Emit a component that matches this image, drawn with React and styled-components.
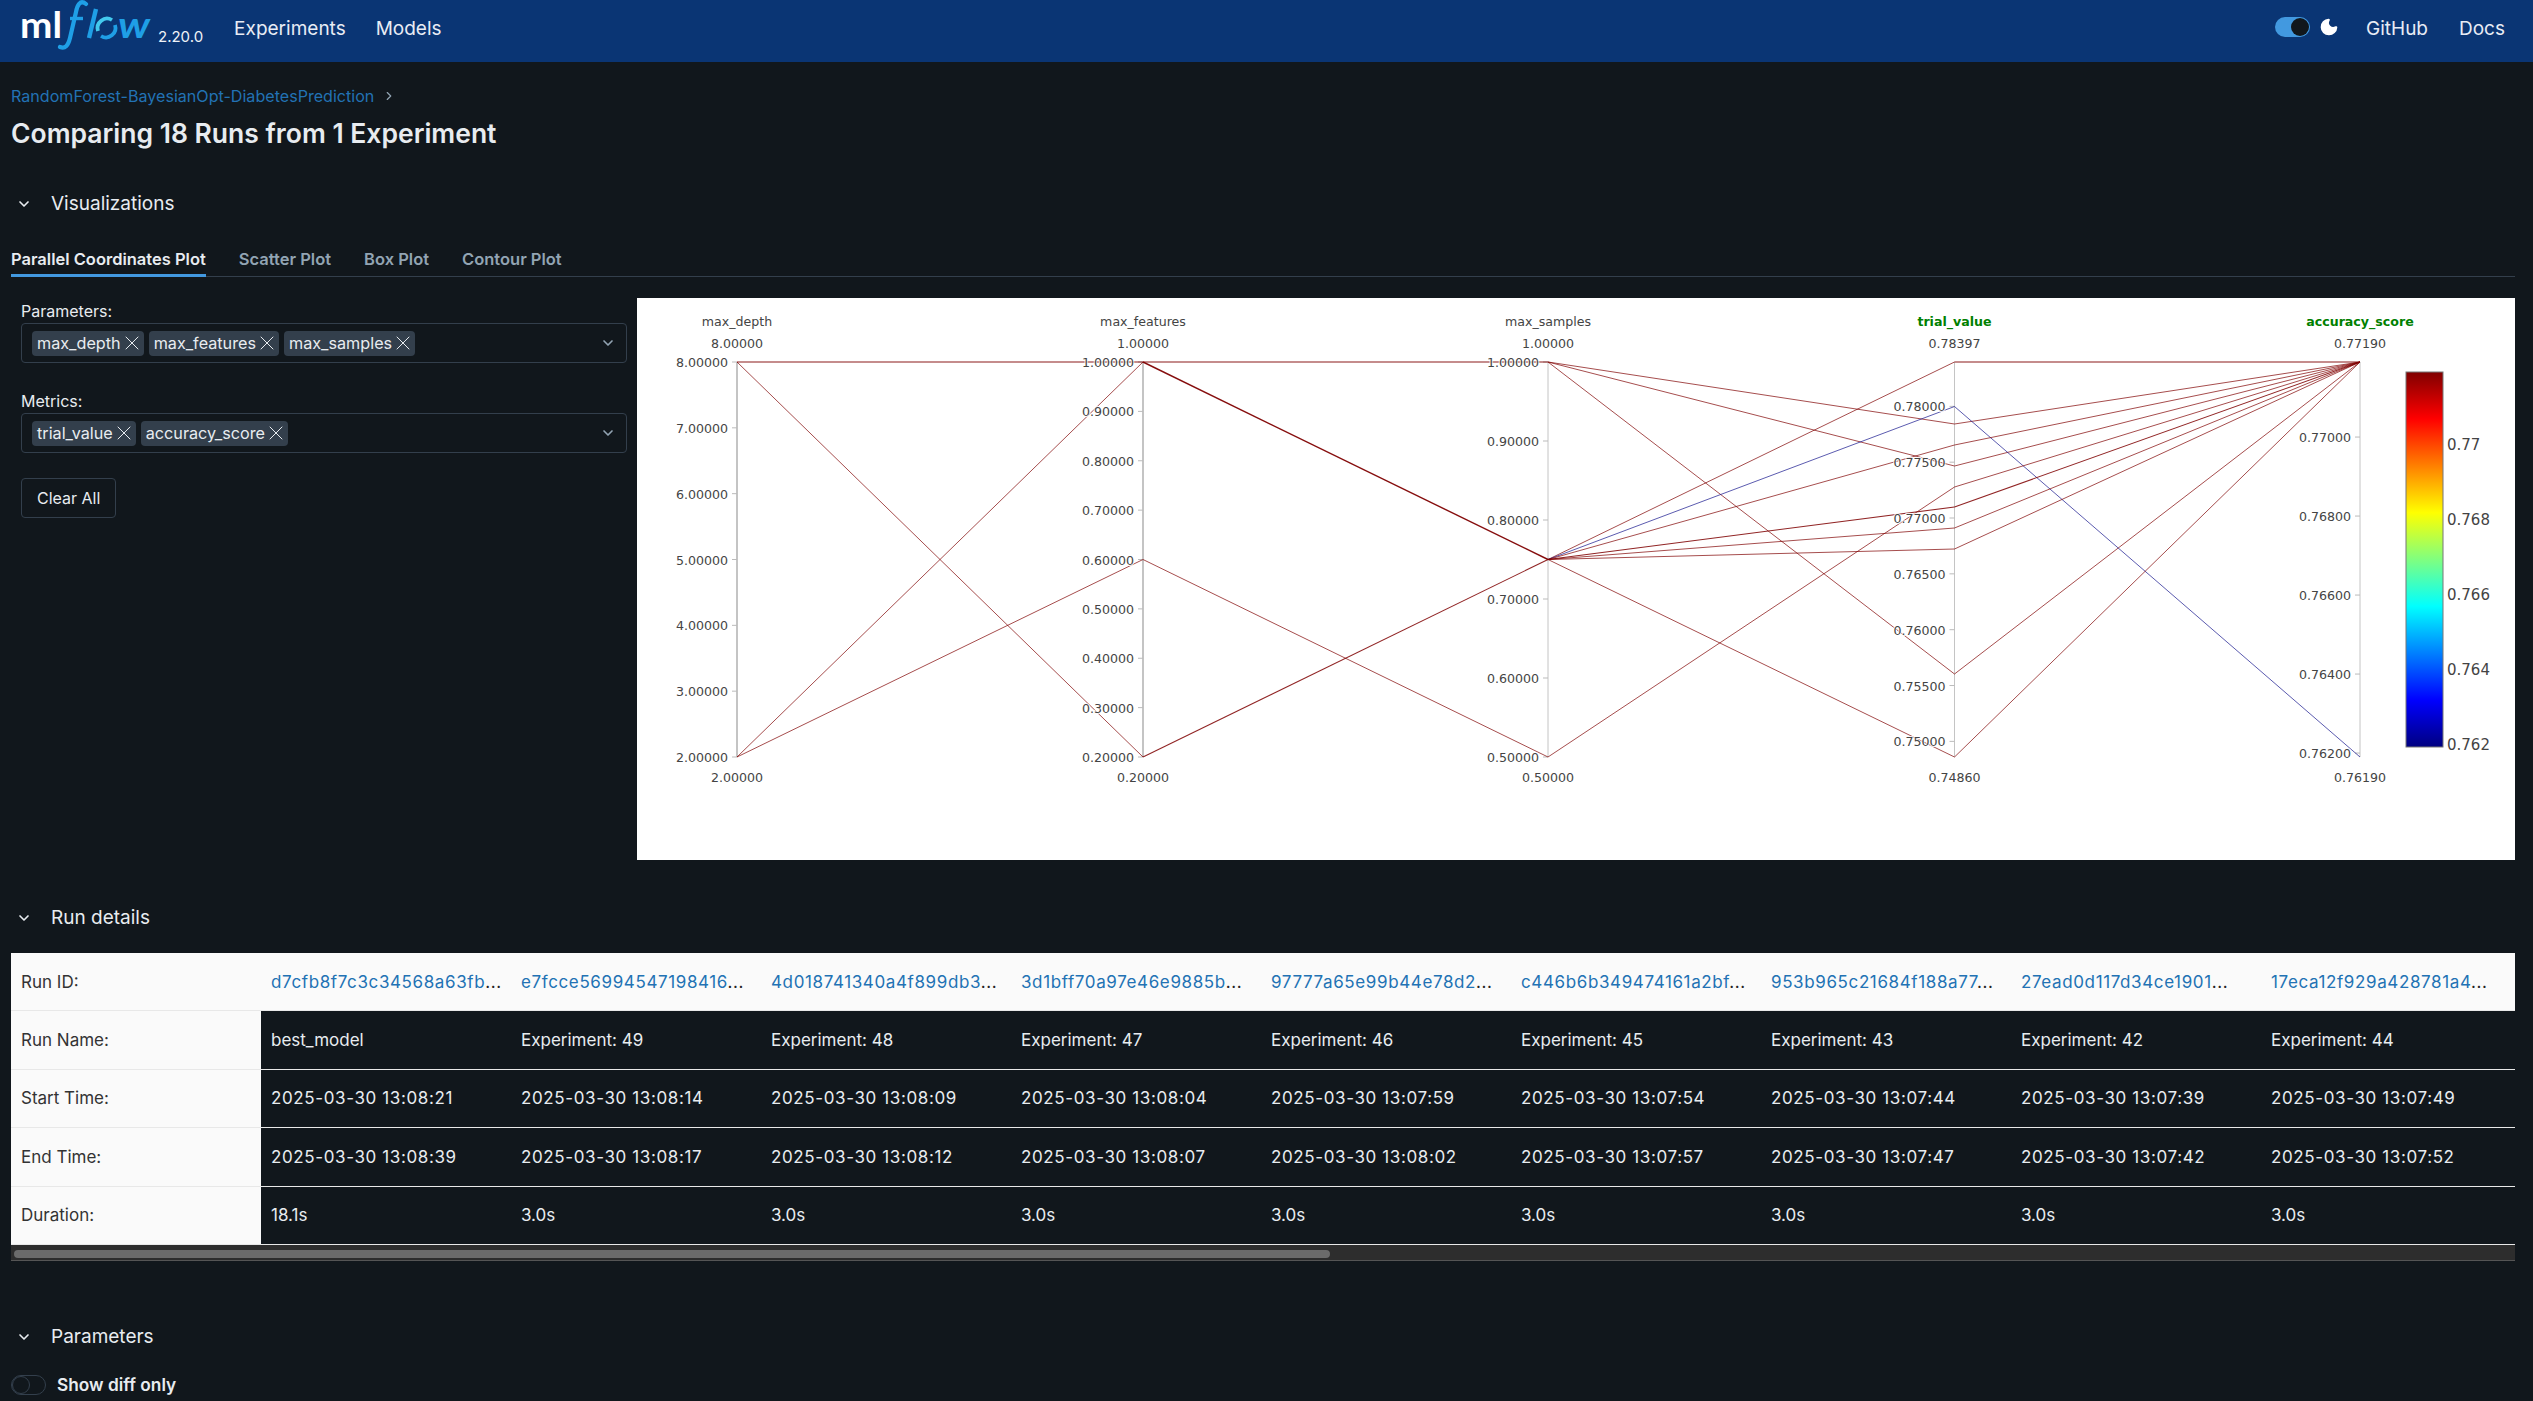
import React from 'react';
import styled, { createGlobalStyle } from 'styled-components';
import { ChevronDown, ChevronRight, Moon, X } from 'lucide-react';

const FONT = 'Inter, "Noto Sans", sans-serif';
const PAGE_BG = '#11171c';
const LINK = '#2272b4';

const GlobalStyle = createGlobalStyle`
  html, body {
    margin: 0;
    overflow: hidden;
    background: ${PAGE_BG};
  }
  * {
    box-sizing: border-box;
  }
`;

const Page = styled.div`
  min-height: 100vh;
  background: ${PAGE_BG};
  color: #e8ecf0;
  font-family: ${FONT};
`;

const Header = styled.header`
  display: flex;
  align-items: center;
  height: 62px;
  padding: 0 28px 6px 10px;
  background: #0a3574;
`;

const LogoMark = styled.svg`
  display: block;
  width: 150px;
  height: 62px;
  margin-top: 6px;
  flex: none;
`;

const Version = styled.span`
  margin: 17px 0 0 -2px;
  font-size: 15px;
  color: #eef2f7;
`;

const HeaderLink = styled.a`
  margin-left: ${(p) => p.$gap}px;
  font-size: 19px;
  color: #e8ecf5;
`;

const HeaderRight = styled.div`
  display: flex;
  align-items: center;
  margin-left: auto;
`;

const ThemeToggle = styled.div`
  display: flex;
  justify-content: flex-end;
  align-items: center;
  width: 35px;
  height: 20px;
  margin-bottom: 2px;
  padding: 0 1px;
  border-radius: 10px;
  background: #4299e0;
`;

const ToggleKnob = styled.span`
  width: 18px;
  height: 18px;
  border-radius: 50%;
  background: ${PAGE_BG};
`;

const MoonIcon = styled(Moon)`
  margin: 0 -1px 2px 9px;
  fill: #fff;
  color: #fff;
`;

const Main = styled.main`
  padding: 0 18px 0 11px;
`;

const Breadcrumb = styled.nav`
  display: flex;
  align-items: center;
  gap: 8px;
  margin-top: 24px;
  font-size: 16.1px;
  line-height: 20px;
  color: #2272b4;
`;

const Title = styled.h1`
  margin: 10px 0 0;
  font-size: 26.5px;
  font-weight: 600;
  line-height: 34px;
  color: #e8ecf0;
`;

const SectionHeader = styled.div`
  display: flex;
  align-items: center;
  margin-top: ${(p) => p.$top}px;
  padding-left: 5px;
  font-size: 19px;
  line-height: 24px;
  color: #e8ecf0;
`;

const SectionChevron = styled(ChevronDown)`
  margin-right: 19px;
`;

const Tabs = styled.div`
  display: flex;
  gap: 33px;
  margin-top: 19px;
  border-bottom: 1px solid #333f4c;
`;

const Tab = styled.div`
  padding: 14px 0 5px;
  border-bottom: 3px solid ${(p) => (p.$active ? '#4299e0' : 'transparent')};
  margin-bottom: -1px;
  font-size: 16.5px;
  font-weight: 600;
  line-height: 20px;
  color: ${(p) => (p.$active ? '#e8ecf0' : '#92a4b3')};
`;

const VizBody = styled.div`
  display: grid;
  grid-template-columns: 626px 1fr;
  margin-top: 21px;
`;

const Controls = styled.div`
  padding: 3px 10px;
`;

const FieldLabel = styled.div`
  margin-top: ${(p) => p.$top || 0}px;
  margin-bottom: 2px;
  font-size: 16px;
  line-height: 20px;
  color: #e8ecf0;
`;

const SelectBox = styled.div`
  display: flex;
  align-items: center;
  gap: 5px;
  height: 40px;
  padding: 0 10px;
  border: 1px solid #333f4c;
  border-radius: 4px;
`;

const SelectChevron = styled(ChevronDown)`
  margin-left: auto;
  color: #92a4b3;
`;

const Tag = styled.span`
  display: flex;
  align-items: center;
  gap: 3px;
  height: 25px;
  padding: 0 4px 0 5px;
  border-radius: 4px;
  background: #333f4c;
  font-size: 16.2px;
  color: #e8ecf0;
`;

const TagClose = styled(X)`
  margin: -4px;
`;

const ClearButton = styled.button`
  display: block;
  height: 40px;
  margin-top: 25px;
  padding: 0 15px;
  border: 1px solid #333f4c;
  border-radius: 4px;
  background: transparent;
  font-family: ${FONT};
  font-size: 16px;
  color: #e8ecf0;
`;

const PlotFrame = styled.div`
  height: 562px;
  background: #fff;
`;

const PlotSvg = styled.svg`
  display: block;
  width: 100%;
  height: 100%;
  font-family: "DejaVu Sans", sans-serif;
`;

const AxisText = styled.text`
  font-size: 12.6px;
  fill: ${(p) => p.$fill || '#444'};
  font-weight: ${(p) => (p.$bold ? 700 : 400)};
  stroke: #fff;
  stroke-width: 2px;
  stroke-opacity: 0.8;
  paint-order: stroke;
`;

const ScaleText = styled.text`
  font-size: 15px;
  fill: #444;
`;

const TableWrap = styled.div`
  margin-top: 23px;
  overflow: hidden;
`;

const RunTable = styled.table`
  width: 2750px;
  table-layout: fixed;
  border-collapse: separate;
  border-spacing: 0;
`;

const LabelCell = styled.th`
  width: 250px;
  height: 58.4px;
  padding: 0 10px;
  border-bottom: 1px solid #e8e8e8;
  background: #fafafa;
  font-size: 17px;
  font-weight: 400;
  text-align: left;
  color: #333;
`;

const ValueCell = styled.td`
  height: 58.4px;
  padding: 0 10px;
  border-bottom: 1px solid #e8e8e8;
  background: ${(p) => (p.$light ? '#fafafa' : 'transparent')};
  font-size: 17px;
  letter-spacing: ${(p) => (p.$spaced ? '0.62px' : '0')};
  white-space: nowrap;
  color: ${(p) => (p.$light ? '#222' : '#e8ecf0')};
`;

const RunLink = styled.a`
  color: ${LINK};
`;

const ScrollTrack = styled.div`
  height: 16px;
  padding: 5px 0 0 3px;
  background: #2d2d2d;
  border-bottom: 1px solid #555;
`;

const ScrollThumb = styled.div`
  width: 1316px;
  height: 8px;
  border-radius: 4px;
  background: #6b6b6b;
`;

const DiffRow = styled.div`
  display: flex;
  align-items: center;
  gap: 11px;
  margin-top: 26px;
  font-size: 17.3px;
  font-weight: 600;
  line-height: 20px;
`;

const DiffSwitch = styled.div`
  display: flex;
  align-items: center;
  width: 35px;
  height: 20px;
  border: 1px solid #333f4c;
  border-radius: 10px;
`;

const DiffKnob = styled.span`
  width: 18px;
  height: 18px;
  border: 1px solid #333f4c;
  border-radius: 50%;
`;

const PLOT_TOP = 363;
const PLOT_BOTTOM = 758;

const AXES = [
  { x: 737, name: 'max_depth', min: 2, max: 8, ticks: [2, 3, 4, 5, 6, 7, 8], width: 2 },
  { x: 1143, name: 'max_features', min: 0.2, max: 1, ticks: [0.2, 0.3, 0.4, 0.5, 0.6, 0.7, 0.8, 0.9, 1], width: 2 },
  { x: 1548, name: 'max_samples', min: 0.5, max: 1, ticks: [0.5, 0.6, 0.7, 0.8, 0.9, 1], width: 1 },
  { x: 1954.5, name: 'trial_value', metric: true, min: 0.7486, max: 0.78397, ticks: [0.75, 0.755, 0.76, 0.765, 0.77, 0.775, 0.78], width: 1 },
  { x: 2360, name: 'accuracy_score', metric: true, min: 0.7619, max: 0.7719, ticks: [0.762, 0.764, 0.766, 0.768, 0.77], width: 1 },
];

// pixel heights of the runs on each axis, read off the plot
// null: the run is only counted from the next axis on, to weigh that part of the line
const LINES = [
  { y: [363, 363, 363, 425, 363] },
  { y: [363, 363, 363, 467, 363] },
  { y: [363, 363, 363, 675, 363] },
  { y: [363, 363, 560.5, 363, 363] },
  { y: [363, 363, 560.5, 407.5, 758], blue: true },
  { y: [758, 363, 560.5, 446, 363] },
  { y: [758, 560.5, 758, 488, 363] },
  { y: [363, 758, 560.5, 508, 363] },
  { y: [null, 758, 560.5, 508, 363] },
  { y: [363, 363, 560.5, 529, 363] },
  { y: [363, 363, 560.5, 550, 363] },
  { y: [363, 363, 560.5, 758, 363] },
];

// overlapping runs are drawn once, a bit heavier the more runs share them
const buildSegments = () => {
  const segments = new Map();
  LINES.forEach((line) => {
    line.y.slice(1).forEach((y, n) => {
      if (line.y[n] === null) return;
      const key = `${n}:${line.y[n]}:${y}`;
      const prev = segments.get(key);
      segments.set(key, {
        x1: AXES[n].x,
        x2: AXES[n + 1].x,
        y1: line.y[n],
        y2: y,
        blue: line.blue && !prev,
        count: prev ? prev.count + 1 : 1,
      });
    });
  });
  return [...segments.values()];
};

const SEGMENTS = buildSegments();

const COLORBAR = [
  { label: '0.77', y: 451 },
  { label: '0.768', y: 526 },
  { label: '0.766', y: 601 },
  { label: '0.764', y: 676 },
  { label: '0.762', y: 751 },
];

const RUNS = [
  ['d7cfb8f7c3c34568a63fb', 'best_model', '13:08:21', '13:08:39', '18.1s'],
  ['e7fcce56994547198416', 'Experiment: 49', '13:08:14', '13:08:17', '3.0s'],
  ['4d018741340a4f899db3', 'Experiment: 48', '13:08:09', '13:08:12', '3.0s'],
  ['3d1bff70a97e46e9885b', 'Experiment: 47', '13:08:04', '13:08:07', '3.0s'],
  ['97777a65e99b44e78d2', 'Experiment: 46', '13:07:59', '13:08:02', '3.0s'],
  ['c446b6b349474161a2bf', 'Experiment: 45', '13:07:54', '13:07:57', '3.0s'],
  ['953b965c21684f188a77', 'Experiment: 43', '13:07:44', '13:07:47', '3.0s'],
  ['27ead0d117d34ce1901', 'Experiment: 42', '13:07:39', '13:07:42', '3.0s'],
  ['17eca12f929a428781a4', 'Experiment: 44', '13:07:49', '13:07:52', '3.0s'],
];

const ROWS = [
  { label: 'Run Name:', value: (r) => r[1] },
  { label: 'Start Time:', value: (r) => `2025-03-30 ${r[2]}`, spaced: true },
  { label: 'End Time:', value: (r) => `2025-03-30 ${r[3]}`, spaced: true },
  { label: 'Duration:', value: (r) => r[4] },
];

const tickY = (axis, v) =>
  PLOT_BOTTOM - ((v - axis.min) / (axis.max - axis.min)) * (PLOT_BOTTOM - PLOT_TOP);

const Logo = () => (
  <LogoMark viewBox="0 0 150 62">
    <text x="10" y="38" fontFamily="Lato, sans-serif" fontSize="37" fontWeight="700" fill="#fff" textLength="42" lengthAdjust="spacingAndGlyphs">
      ml
    </text>
    <path d="M 76 4 C 70 -1 67 6 66 12 L 60 38 C 58 46 55 49 50 47" fill="none" stroke="#1f9fe6" strokeWidth="4.2" strokeLinecap="round" />
    <path d="M 60 18.5 L 73 18.5" fill="none" stroke="#1f9fe6" strokeWidth="3.4" />
    <path d="M 86 9 L 79 38" fill="none" stroke="#1f9fe6" strokeWidth="4.4" />
    <path d="M 88 31 A 9.5 9.5 0 0 1 102 20" fill="none" stroke="#43c9ed" strokeWidth="3.8" />
    <path d="M 105 25 A 9.5 9.5 0 0 1 91 36" fill="none" stroke="#1f9fe6" strokeWidth="3.8" />
    <text x="108" y="38" fontFamily="Lato, sans-serif" fontStyle="italic" fontSize="36" fontWeight="700" fill="#1f9fe6" textLength="32" lengthAdjust="spacingAndGlyphs">
      w
    </text>
  </LogoMark>
);

const ParallelPlot = () => (
  <PlotSvg viewBox="637 299 1878 562">
    <defs>
      <linearGradient id="jet" x1="0" y1="1" x2="0" y2="0">
        <stop offset="0" stopColor="#000080" />
        <stop offset="0.125" stopColor="#0000ff" />
        <stop offset="0.375" stopColor="#00ffff" />
        <stop offset="0.625" stopColor="#ffff00" />
        <stop offset="0.875" stopColor="#ff0000" />
        <stop offset="1" stopColor="#800000" />
      </linearGradient>
    </defs>
    {AXES.map((axis) => (
      <g key={axis.name}>
        <line x1={axis.x} x2={axis.x} y1={PLOT_TOP} y2={PLOT_BOTTOM} stroke="#c4c4c4" strokeWidth={axis.width} />
        {axis.ticks.map((t) => (
          <line key={t} x1={axis.x - 5} x2={axis.x} y1={tickY(axis, t)} y2={tickY(axis, t)} stroke="#bbb" />
        ))}
      </g>
    ))}
    {SEGMENTS.map((s) => {
      const flat = s.y1 === s.y2;
      return (
        <line
          key={`${s.x1}-${s.y1}-${s.y2}`}
          x1={s.x1}
          x2={s.x2}
          y1={s.y1}
          y2={s.y2}
          stroke={s.blue ? '#14148c' : '#7f0000'}
          strokeOpacity={flat ? 0.45 : Math.min(0.95, 0.78 + 0.08 * (s.count - 1))}
          strokeWidth={flat ? 2 : Math.min(1.4, 0.9 + 0.18 * (s.count - 1))}
        />
      );
    })}
    {AXES.map((axis) => (
      <g key={axis.name}>
        <AxisText x={axis.x} y={327} textAnchor="middle" $bold={axis.metric} $fill={axis.metric ? '#008000' : undefined}>
          {axis.name}
        </AxisText>
        <AxisText x={axis.x} y={349} textAnchor="middle">{axis.max.toFixed(5)}</AxisText>
        <AxisText x={axis.x} y={783} textAnchor="middle">{axis.min.toFixed(5)}</AxisText>
        {axis.ticks.map((t) => (
          <AxisText key={t} x={axis.x - 9} y={tickY(axis, t) + 5} textAnchor="end">
            {t.toFixed(5)}
          </AxisText>
        ))}
      </g>
    ))}
    <rect x="2406" y="373" width="37" height="375" fill="url(#jet)" stroke="#777" strokeWidth="1" />
    {COLORBAR.map((c) => (
      <ScaleText key={c.label} x="2447" y={c.y}>{c.label}</ScaleText>
    ))}
  </PlotSvg>
);

const Chip = ({ children }) => (
  <Tag>
    {children}
    <TagClose size={24} strokeWidth={1} />
  </Tag>
);

export default function App() {
  return (
    <Page>
      <GlobalStyle />
      <Header>
        <Logo />
        <Version>2.20.0</Version>
        <HeaderLink $gap={31}>Experiments</HeaderLink>
        <HeaderLink $gap={30}>Models</HeaderLink>
        <HeaderRight>
          <ThemeToggle>
            <ToggleKnob />
          </ThemeToggle>
          <MoonIcon size={20} />
          <HeaderLink $gap={28}>GitHub</HeaderLink>
          <HeaderLink $gap={31}>Docs</HeaderLink>
        </HeaderRight>
      </Header>
      <Main>
        <Breadcrumb>
          RandomForest-BayesianOpt-DiabetesPrediction
          <ChevronRight size={14} color="#92a4b3" />
        </Breadcrumb>
        <Title>Comparing 18 Runs from 1 Experiment</Title>

        <SectionHeader $top={42}>
          <SectionChevron size={16} strokeWidth={2.5} />
          Visualizations
        </SectionHeader>
        <Tabs>
          <Tab $active>Parallel Coordinates Plot</Tab>
          <Tab>Scatter Plot</Tab>
          <Tab>Box Plot</Tab>
          <Tab>Contour Plot</Tab>
        </Tabs>
        <VizBody>
          <Controls>
            <FieldLabel>Parameters:</FieldLabel>
            <SelectBox>
              <Chip>max_depth</Chip>
              <Chip>max_features</Chip>
              <Chip>max_samples</Chip>
              <SelectChevron size={16} strokeWidth={2.5} />
            </SelectBox>
            <FieldLabel $top={28}>Metrics:</FieldLabel>
            <SelectBox>
              <Chip>trial_value</Chip>
              <Chip>accuracy_score</Chip>
              <SelectChevron size={16} strokeWidth={2.5} />
            </SelectBox>
            <ClearButton>Clear All</ClearButton>
          </Controls>
          <PlotFrame>
            <ParallelPlot />
          </PlotFrame>
        </VizBody>

        <SectionHeader $top={46}>
          <SectionChevron size={16} strokeWidth={2.5} />
          Run details
        </SectionHeader>
        <TableWrap>
          <RunTable>
            <tbody>
              <tr>
                <LabelCell>Run ID:</LabelCell>
                {RUNS.map((run) => (
                  <ValueCell key={run[0]} $light $spaced>
                    <RunLink>{run[0]}</RunLink>...
                  </ValueCell>
                ))}
                <ValueCell $light />
              </tr>
              {ROWS.map((row) => (
                <tr key={row.label}>
                  <LabelCell>{row.label}</LabelCell>
                  {RUNS.map((run) => (
                    <ValueCell key={run[0]} $spaced={row.spaced}>{row.value(run)}</ValueCell>
                  ))}
                  <ValueCell />
                </tr>
              ))}
            </tbody>
          </RunTable>
        </TableWrap>
        <ScrollTrack>
          <ScrollThumb />
        </ScrollTrack>

        <SectionHeader $top={64}>
          <SectionChevron size={16} strokeWidth={2.5} />
          Parameters
        </SectionHeader>
        <DiffRow>
          <DiffSwitch>
            <DiffKnob />
          </DiffSwitch>
          Show diff only
        </DiffRow>
      </Main>
    </Page>
  );
}
